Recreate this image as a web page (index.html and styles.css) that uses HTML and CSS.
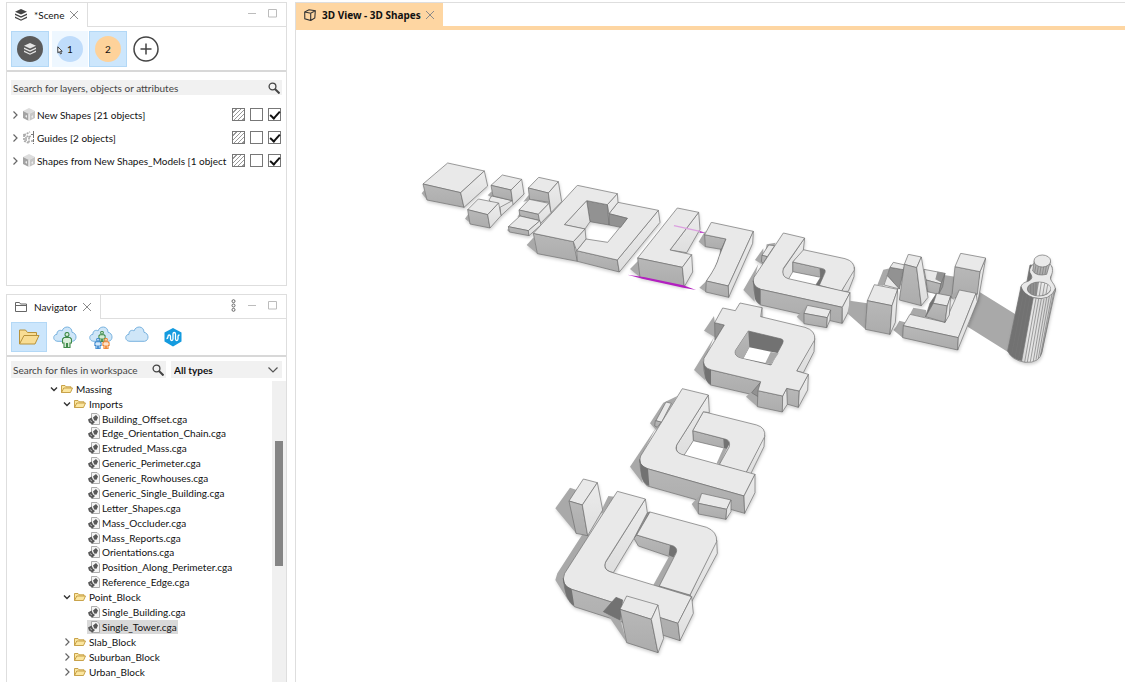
FILE: index.html
```html
<!DOCTYPE html>
<html lang="en">
<head>
<meta charset="utf-8">
<title>3D View - 3D Shapes</title>
<link rel="stylesheet" href="styles.css">
</head>
<body>
<svg class="defs" width="0" height="0" aria-hidden="true">
  <symbol id="close" viewBox="0 0 10 10"><path d="M1 1l8 8M9 1L1 9" fill="none" stroke="#8a8a8a"/></symbol>
  <symbol id="min" viewBox="0 0 10 10"><path d="M1 4.500h8" stroke="#bcbcbc" fill="none"/></symbol>
  <symbol id="max" viewBox="0 0 10 10"><path d="M.5.500h8v7.500h-8z" stroke="#bcbcbc" fill="none"/></symbol>
  <symbol id="right" viewBox="0 0 8 10"><path d="M2.500 1.500L6 5 2.500 8.500" stroke="#666" stroke-width="1.200" fill="none"/></symbol>
  <symbol id="down" viewBox="0 0 8 10"><path d="M1 3.500L4 6.500 7 3.500" stroke="#333" stroke-width="1.400" fill="none"/></symbol>
  <symbol id="search" viewBox="0 0 12 12"><circle cx="4.500" cy="4.500" r="3.400" fill="none" stroke="#444" stroke-width="1.300"/><path d="M7 7l4.500 4.500" stroke="#444" stroke-width="2"/></symbol>
  <symbol id="layers" viewBox="0 0 12 12"><path d="M6 0l6 2.800-6 2.800L0 2.800zM0 4.500l6 2.800 6-2.800v1.400L6 8.700 0 5.900zM0 7.600l6 2.800 6-2.800V9l-6 2.800L0 9z" fill="currentColor"/></symbol>
  <symbol id="folder" viewBox="0 0 12 10"><path d="M.5 8.500v-7h3.500l1 1.300h5V4M.5 8.500L2.800 4h8.700L9.500 8.500z" fill="#fbe6a0" stroke="#c39a3c" stroke-width=".9"/></symbol>
  <symbol id="rule" viewBox="0 0 12 12"><path d="M3.500.5H9L11.500 3v8.500h-8z" fill="#f4f4f4" stroke="#999" stroke-width=".8"/><path d="M5 4.500L8 2l2 2.500-1.500 3.200L6.200 7.500zM0 6.500L3.500 4.500 5 7.500 7 9 4.500 11.500 1 9.500z" fill="#585858"/><path d="M2 7.500l2 1.500" stroke="#ddd" stroke-width=".7"/></symbol>
  <symbol id="cube" viewBox="0 0 12 13"><path d="M6 0l6 3-6 3-6-3z" fill="#ddd"/><path d="M0 3l6 3v7l-6-3z" fill="#a3a3a3"/><path d="M12 3L6 6v7l6-3z" fill="#c6c6c6"/><path d="M6 6v7" stroke="#fff" stroke-width="1.200"/><path d="M2 8l2-1v3zM8 9l2-2v3z" fill="#eee"/></symbol>
  <symbol id="guide" viewBox="0 0 12 13"><path d="M1 4l6-3M1 4v6l5 2V6zM6 6l2-1" stroke="#aaa" stroke-width="1.700" stroke-dasharray="2 1" fill="none"/><path d="M3 6v4" stroke="#bbb" stroke-width="2"/><path d="M10.500 0v13M8 3.500h4M8 10h4" stroke="#777" stroke-dasharray="3 1" fill="none"/></symbol>
  <symbol id="cloud" viewBox="0 0 24 16"><path d="M5 15.300C-.5 15.300-.5 8.600 4 8.300 3.500 4.500 7.500 3.500 9 5 10.500-.5 19-.5 19 6.300c5 .7 5.500 8.300.5 9z" fill="#cfe6f8" stroke="#78b2df"/></symbol>
  <symbol id="person" viewBox="0 0 10 16"><circle cx="5" cy="2.500" r="2"/><path d="M2 5.500h6l1.500 1.500v4H8v4.500H5.500v-4h-1v4H2V11H.5V7z"/></symbol>
</svg>
<div class="app">
  <div class="side">
    <section class="panel scene">
      <header class="head">
        <div class="tab"><svg class="i12 ink"><use href="#layers"/></svg><h2>*Scene</h2><button class="ic" aria-label="Close Scene"><svg class="i10"><use href="#close"/></svg></button></div>
        <div class="win"><button class="ic" aria-label="Minimize"><svg class="i10"><use href="#min"/></svg></button><button class="ic" aria-label="Maximize"><svg class="i10"><use href="#max"/></svg></button></div>
      </header>
      <div class="tools">
        <button class="scenario on" aria-label="Default layers"><span class="disc dark"><svg class="i12"><use href="#layers"/></svg></span></button>
        <button class="scenario hover"><svg class="cursor" viewBox="0 0 6 9"><path d="M.8.8v6L2.300 5.600 3.500 8 4.500 7.500 3.500 5.300h1.700z" fill="#fff" stroke="#333" stroke-width=".9"/></svg><span class="disc blue">1</span></button>
        <button class="scenario on"><span class="disc orange">2</span></button>
        <button class="scenario plain" aria-label="Add scenario"><svg class="plus" viewBox="0 0 26 26"><circle cx="13" cy="13" r="12" fill="#fff" stroke="#444" stroke-width="1.500"/><path d="M13 7.500v11M7.500 13h11" stroke="#444" stroke-width="1.500"/></svg></button>
      </div>
      <div class="filters"><label class="field"><input type="search" placeholder="Search for layers, objects or attributes" aria-label="Search layers"><svg class="i12"><use href="#search"/></svg></label></div>
      <ul class="layers">
        <li><button class="ic" aria-label="Expand"><svg class="tw"><use href="#right"/></svg></button><svg class="i13"><use href="#cube"/></svg><span class="name">New Shapes [21 objects]</span><input class="hatch" type="checkbox" aria-label="Color New Shapes"><input type="checkbox" aria-label="Lock New Shapes"><input type="checkbox" checked aria-label="Show New Shapes"></li>
        <li><button class="ic" aria-label="Expand"><svg class="tw"><use href="#right"/></svg></button><svg class="i13"><use href="#guide"/></svg><span class="name">Guides [2 objects]</span><input class="hatch" type="checkbox" aria-label="Color Guides"><input type="checkbox" aria-label="Lock Guides"><input type="checkbox" checked aria-label="Show Guides"></li>
        <li><button class="ic" aria-label="Expand"><svg class="tw"><use href="#right"/></svg></button><svg class="i13"><use href="#cube"/></svg><span class="name">Shapes from New Shapes_Models [1 object</span><input class="hatch" type="checkbox" aria-label="Color models"><input type="checkbox" aria-label="Lock models"><input type="checkbox" checked aria-label="Show models"></li>
      </ul>
    </section>

    <section class="panel navigator">
      <header class="head">
        <div class="tab"><svg class="i12" viewBox="0 0 12 12"><path d="M.5 10.500v-9h4l1 1.500h6v7.500zM.5 4.500h11" fill="#fff" stroke="#666"/></svg><h2>Navigator</h2><button class="ic" aria-label="Close Navigator"><svg class="i10"><use href="#close"/></svg></button></div>
        <div class="win"><button class="ic" aria-label="View menu"><svg class="dots" viewBox="0 0 5 13"><g fill="#fff" stroke="#666"><circle cx="2.500" cy="2.200" r="1.500"/><circle cx="2.500" cy="6.500" r="1.500"/><circle cx="2.500" cy="10.800" r="1.500"/></g></svg></button><button class="ic" aria-label="Minimize"><svg class="i10"><use href="#min"/></svg></button><button class="ic" aria-label="Maximize"><svg class="i10"><use href="#max"/></svg></button></div>
      </header>
      <div class="tools places">
        <button class="place on" aria-label="Workspace"><svg viewBox="0 0 24 24"><path d="M2.500 19V5h6l2 2.500h9V11M2.500 19L7 10.500h15L18 19z" fill="#f8dd94" stroke="#b8923a"/></svg></button>
        <button class="place" aria-label="My content"><svg viewBox="0 0 24 24"><use href="#cloud" width="24" height="16" y="1"/><g fill="#dcefdc" stroke="#3f8a49" stroke-width="1.100"><use href="#person" x="9" y="7" width="10" height="16"/></g></svg></button>
        <button class="place" aria-label="My groups"><svg viewBox="0 0 24 24"><use href="#cloud" width="24" height="16" y="1"/><g fill="#d5ecd5" stroke="#3f8a49" stroke-width="1.500"><use href="#person" x="9" y="6" width="8" height="11"/></g><g fill="#d5e9fa" stroke="#3a86cc" stroke-width="1.500"><use href="#person" x="5" y="13" width="8" height="11"/></g><g fill="#fde3cc" stroke="#ee8330" stroke-width="1.500"><use href="#person" x="13" y="13" width="8" height="11"/></g></svg></button>
        <button class="place" aria-label="All portal content"><svg viewBox="0 0 24 24"><use href="#cloud" width="24" height="16" y="1"/></svg></button>
        <button class="place" aria-label="Urban"><svg viewBox="0 0 24 24"><path d="M12 3l8.500 4.500v9L12 21.500l-8.500-5v-9z" fill="#149bdf"/><path d="M5.500 13.500q1.500 0 1.500-2 0-1.500 1.200-1.500t1.300 1.500v2.500q0 1.500 1.200 1.500t1.300-1.500V9q0-1.500 1.200-1.500T14.500 9v5q0 1.500 1.200 1.500T17 14v-2.500q0-1.500 1.500-1.500" fill="none" stroke="#fff" stroke-width="1.300"/></svg></button>
      </div>
      <div class="filters split"><label class="field"><input type="search" placeholder="Search for files in workspace" aria-label="Search files"><svg class="i12"><use href="#search"/></svg></label>
        <div class="pick"><select aria-label="File types"><option>All types</option></select><svg class="caret" viewBox="0 0 10 8"><path d="M.5 1.500L5 6l4.500-4.500" fill="none" stroke="#555" stroke-width="1.200"/></svg></div></div>
      <div class="files">
        <ul class="tree">
          <li class="d0"><button class="ic" aria-label="Collapse"><svg class="tw"><use href="#down"/></svg></button><svg class="fo"><use href="#folder"/></svg><span>Massing</span></li>
          <li class="d1"><button class="ic" aria-label="Collapse"><svg class="tw"><use href="#down"/></svg></button><svg class="fo"><use href="#folder"/></svg><span>Imports</span></li>
          <li class="d2"><a href="#f"><svg class="i12"><use href="#rule"/></svg>Building_Offset.cga</a></li>
          <li class="d2"><a href="#f"><svg class="i12"><use href="#rule"/></svg>Edge_Orientation_Chain.cga</a></li>
          <li class="d2"><a href="#f"><svg class="i12"><use href="#rule"/></svg>Extruded_Mass.cga</a></li>
          <li class="d2"><a href="#f"><svg class="i12"><use href="#rule"/></svg>Generic_Perimeter.cga</a></li>
          <li class="d2"><a href="#f"><svg class="i12"><use href="#rule"/></svg>Generic_Rowhouses.cga</a></li>
          <li class="d2"><a href="#f"><svg class="i12"><use href="#rule"/></svg>Generic_Single_Building.cga</a></li>
          <li class="d2"><a href="#f"><svg class="i12"><use href="#rule"/></svg>Letter_Shapes.cga</a></li>
          <li class="d2"><a href="#f"><svg class="i12"><use href="#rule"/></svg>Mass_Occluder.cga</a></li>
          <li class="d2"><a href="#f"><svg class="i12"><use href="#rule"/></svg>Mass_Reports.cga</a></li>
          <li class="d2"><a href="#f"><svg class="i12"><use href="#rule"/></svg>Orientations.cga</a></li>
          <li class="d2"><a href="#f"><svg class="i12"><use href="#rule"/></svg>Position_Along_Perimeter.cga</a></li>
          <li class="d2"><a href="#f"><svg class="i12"><use href="#rule"/></svg>Reference_Edge.cga</a></li>
          <li class="d1"><button class="ic" aria-label="Collapse"><svg class="tw"><use href="#down"/></svg></button><svg class="fo"><use href="#folder"/></svg><span>Point_Block</span></li>
          <li class="d2"><a href="#f"><svg class="i12"><use href="#rule"/></svg>Single_Building.cga</a></li>
          <li class="d2"><a class="sel" href="#f"><svg class="i12"><use href="#rule"/></svg>Single_Tower.cga</a></li>
          <li class="d1"><button class="ic" aria-label="Expand"><svg class="tw"><use href="#right"/></svg></button><svg class="fo"><use href="#folder"/></svg><span>Slab_Block</span></li>
          <li class="d1"><button class="ic" aria-label="Expand"><svg class="tw"><use href="#right"/></svg></button><svg class="fo"><use href="#folder"/></svg><span>Suburban_Block</span></li>
          <li class="d1"><button class="ic" aria-label="Expand"><svg class="tw"><use href="#right"/></svg></button><svg class="fo"><use href="#folder"/></svg><span>Urban_Block</span></li>
        </ul>
        <div class="track"><div class="thumb"></div></div>
      </div>
    </section>
  </div>

  <main class="view">
    <header class="viewhead"><div class="viewtab"><svg class="i12" viewBox="0 0 12 12"><path d="M.7 3L5 .7l6.300 1L10.800 9l-4 2.500-6-1.700zM.7 3l6 1.200 4.600-2.500M6.700 4.200v7" fill="none" stroke="#333" stroke-width="1.100"/></svg><h1>3D View - 3D Shapes</h1><button class="ic" aria-label="Close 3D View"><svg class="i10"><use href="#close"/></svg></button></div></header>
    <svg class="canvas" viewBox="296 30 829 652" preserveAspectRatio="xMinYMin meet" role="img" aria-label="Massing models">
      <defs>
        <linearGradient id="gs" x1="0" y1="0" x2="0" y2="1"><stop offset="0" stop-color="#b8b8b8"/><stop offset="1" stop-color="#acacac"/></linearGradient>
        <linearGradient id="gr" x1="0" y1="0" x2="0" y2="1"><stop offset="0" stop-color="#ececec"/><stop offset="1" stop-color="#dedede"/></linearGradient>
        <linearGradient id="gc"><stop offset="0" stop-color="#b5b5b5"/><stop offset=".45" stop-color="#e6e6e6"/><stop offset="1" stop-color="#cfcfcf"/></linearGradient>
      </defs>
      <g transform="translate(415 150) scale(.33333)">
        <g class="solid">
          <path class="h" d="M20 130L28 120 36 150Z"/>
          <path class="t" d="M98 39L208 63 137 128 24 102Z"/><path class="s" d="M24 102L137 128 147 172 36 150Z"/><path class="r" d="M137 128L208 63 218 108 147 172Z"/>
        </g>
        <g class="solid">
          <path class="h" d="M218 136L230 124 236 145ZM150 206L160 192 165 218Z"/>
          <path class="t" d="M230 138L292 152 258 185 222 150Z"/><path class="r" d="M255 172L292 152 327 130 296 162 258 197Z"/>
          <path class="t" d="M262 75L320 88 288 120 228 106Z"/><path class="s" d="M228 106L288 120 292 152 234 138Z"/><path class="r" d="M288 120L320 88 327 132 294 164Z"/>
          <path class="t" d="M190 147L251 159 218 194 158 179Z"/><path class="s" d="M158 179L218 194 225 234 165 222Z"/><path class="r" d="M218 194L251 159 258 197 225 234Z"/>
        </g>
        <g class="solid">
          <path class="h" d="M325 155L341 135 346 150ZM307 202L314 190 318 198ZM276 240L281 236 283 246Z"/>
          <path class="t" d="M371 82L430 95 400 129 340 114Z"/><path class="s" d="M340 114L400 129 404 157 344 148Z"/><path class="r" d="M400 129L430 95 440 155 408 188Z"/>
          <path class="t" d="M343 148L402 160 370 193 312 180Z"/><path class="s" d="M312 180L370 193 375 212 315 198Z"/><path class="r" d="M370 193L402 160 408 188 375 222Z"/>
          <path class="t" d="M315 198L375 212 340 242 280 230Z"/><path class="s" d="M280 230L340 242 342 257 283 246Z"/><path class="r" d="M340 242L375 212 378 225 342 257Z"/>
        </g>
        <g class="solid">
          <path class="h" d="M335 285L356 262 367 311Z"/>
          <path class="s" d="M355 250L475 275 487 334 367 311Z"/><path class="s" d="M485 302L607 330 613 366 487 334Z"/><path class="r" d="M607 330L730 181 735 217 613 366Z"/>
          <path class="t" d="M609 157L730 181 607 330 485 302 513 267 578 277 637 205 582 191Z"/>
          <path class="r" d="M475 275L510 237 513 267 485 302ZM577 164L607 131 609 157 582 191Z"/>
          <path class="m" d="M515 152L577 164 582 225 525 215ZM582 191L637 205 617 232 582 225Z"/><path class="r" d="M515 152L525 215 510 237 448 224Z"/>
          <path class="t" d="M487 106L607 131 577 164 515 152 448 224 510 237 475 275 355 250Z"/>
        </g>
      </g>
      <g transform="translate(620 190) scale(.33333)">
        <g class="solid">
          <path class="h" d="M30 237L54 213 60 262Z"/>
          <path class="r" d="M236 67L240 118 200 188 150 180Z"/><path class="t" d="M172 54L236 67 150 180 215 194 187 232 53 204Z"/><path class="s" d="M53 204L187 232 193 290 60 262Z"/><path class="r" d="M187 232L215 194 218 246 193 290Z"/>
        </g>
        <path class="mag" d="M22 254L75 262 190 286 228 300 190 293 70 267Z"/><path class="mag" d="M235 122L258 128 240 128Z"/><path d="M162 107L240 124" stroke="#dca0e0" stroke-width="4"/>
        <g class="solid">
          <path class="h" d="M236 155L256 122 256 172ZM238 293L259 273 258 306Z"/><path class="m" d="M318 147L302 175Q304 215 262 270L280 250Z"/>
          <path class="s" d="M254 134L318 147 304 178 256 170Z"/><path class="t" d="M274 97L400 124 325 288 259 273Q290 230 297 200L318 147 254 134Z"/><path class="s" d="M259 273L325 288 326 322 257 306Z"/><path class="r" d="M325 288L400 124 398 160 326 322Z"/>
        </g>
        <g class="solid">
          <path class="h" d="M370 300L415 222 402 270 404 335ZM405 210L430 175 430 225Z"/><path class="h" d="M440 163L467 158 455 185 430 218Z"/><path class="t" d="M446 165L464 167 442 200 426 196Z"/><path class="s" d="M426 196L442 200 430 220 424 215Z"/>
          <path class="r" d="M703 232L702 260 685 304 664 304Z"/><path class="w" d="M518 243L602 260 590 285 505 267Z"/><path class="s" d="M518 216L608 236 602 262 518 245Z"/><path class="d" d="M600 236L616 240 600 287 588 284 602 262Z"/>
          <path class="t" d="M545 178L675 206Q705 214 703 240L664 304 598 286 615 248Q618 238 608 236L518 216Z"/>
          <path class="r" d="M554 144L550 180 518 216V246L505 268Q485 262 488 240Z"/>
          <path class="t" d="M490 129L554 144 490 235Q483 260 505 266L690 308 667 352 422 298Q392 288 402 262Z"/>
          <path class="s" d="M400 272Q400 291 422 298L667 352 666 400 422 345Q402 335 400 272Z"/><path class="d n" d="M401 278Q405 292 422 298V345Q404 335 404 320Z"/><path class="r" d="M667 352L690 308 689 358 667 400Z"/>
          <path class="h" d="M530 380L560 347 552 401Z"/><path class="t" d="M562 346L632 360 622 383 552 370Z"/><path class="s" d="M552 370L622 383 620 413 552 401Z"/><path class="r" d="M622 383L632 360 630 390 620 413Z"/>
        </g>
      </g>
      <g transform="translate(840 235) scale(.33333)">
        <path class="h" d="M30 197L82 205 76 283 22 235ZM420 172L530 240 505 352 383 275ZM168 275L178 257 195 262 188 308 160 285Z"/>
        <g class="solid"><path class="t" d="M103 149L173 163 156 212 82 197Z"/><path class="s" d="M82 197L156 212 150 298 76 283Z"/><path class="r" d="M156 212L173 163 166 262 150 298Z"/></g>
        <path class="h" d="M112 150L130 104 150 100 130 153Z"/><path class="m" d="M150 97L192 104 178 162 142 122Z"/><path class="t" d="M160 82L195 90 190 104 150 97ZM142 122L178 162 132 150Z"/>
        <path class="h" d="M312 120L345 125 338 190 296 178Z"/><path class="t" d="M252 103L315 115 303 147 258 135Z"/><path class="m n" d="M292 110L315 115 305 143 286 133Z"/><path class="s" d="M258 135L303 147 296 178 262 170Z"/><path class="m" d="M303 147L315 115 308 155 296 178Z"/>
        <g class="solid"><path class="t" d="M205 58L244 66 230 98 193 88Z"/><path class="s" d="M193 88L230 98 244 212 178 195Z"/><path class="r" d="M230 98L244 66 264 187 244 212Z"/></g>
        <g class="solid">
          <path class="r" d="M420 110L437 69 414 200 405 195Z"/><path class="s" d="M345 95L420 110 412 178 335 190Z"/><path class="t" d="M362 55L437 69 420 110 345 95Z"/>
          <path class="h" d="M210 238L220 218 258 225 260 248ZM335 180L358 165 340 195Z"/>
          <path class="t" d="M358 165L408 175 355 308 190 272 210 238 315 262Z"/><path class="s" d="M190 272L355 308 353 345 188 308Z"/><path class="r" d="M355 308L408 175 412 200 353 345Z"/>
          <path class="d" d="M290 175L280 205 257 245 270 205Z"/><path class="t" d="M290 175L332 183 322 213 280 205Z"/><path class="s" d="M280 205L322 213 315 262 257 245Z"/><path class="r" d="M322 213L332 183 328 240 315 262Z"/>
        </g>
        <g class="solid">
          <path class="d" d="M570 90L558 155 630 150 636 95Z"/>
          <path class="t" d="M582 85Q560 105 574 120 582 135 555 142C530 155 548 175 570 185 600 197 640 192 646 168 648 145 628 140 632 125 642 108 637 92 628 85Z"/>
          <path class="c" d="M543 155Q550 178 580 188 630 200 647 160L606 350Q600 385 555 382 515 375 503 348Z"/>
          <path class="d n" d="M543 155Q552 178 580 188L545 378Q512 370 503 348Z"/>
          <path class="ln" d="M551 172L515 358M560 180L525 368M570 185L535 374M580 188L545 378M588 190L554 381M596 192L562 381M604 192L571 380M612 192L580 378M620 189L588 374M628 184L595 370M636 177L601 363M642 170L604 358"/>
          <ellipse class="m" cx="597" cy="162" rx="35" ry="21"/><path class="r n" d="M590 182L597 142Q630 145 632 162 625 182 590 182Z"/><path class="ln" d="M572 150V174M580 146V178M588 142V181M604 142L598 182M614 145L608 181M623 149L618 177"/>
          <path class="s" d="M583 78L578 108Q590 125 620 118L631 80Z"/><path class="ln" d="M588 90L584 113M595 94L591 117M603 96L599 119M611 96L607 119M619 93L615 117"/><ellipse class="t" cx="607" cy="78" rx="25" ry="18"/>
        </g>
      </g>
      <g transform="translate(690 290) scale(.33333)">
        <g class="solid">
          <path class="h" d="M42 122L72 78 80 145ZM12 240L72 142 42 215 47 272Z"/><path class="m" d="M74 98L103 105 75 150Z"/>
          <path class="r" d="M374 145L372 185 340 248 320 243ZM216 53L216 82 208 78Z"/><path class="s" d="M40 215Q42 235 65 240L212 275 205 318 62 285Q42 275 40 215Z"/><path class="d n" d="M40 218Q44 234 63 240V285Q44 272 45 255Z"/>
          <path class="h" d="M168 320L212 278 202 350Z"/><path class="m" d="M185 308L212 276 204 320Z"/>
          <path class="s" d="M204 302L278 318 277 366 202 350ZM290 295L328 303 325 352 290 342Z"/><path class="r" d="M278 318L290 295 292 343 277 366ZM328 303L355 253 353 300 325 352Z"/>
          <path class="t" d="M150 39L216 53 212 80 345 112Q378 122 374 150L320 243 355 253 328 303 290 295 278 318 204 302 212 275 65 240Q35 232 42 205L103 105 74 98 98 54 136 62Z"/>
          <path class="d" d="M175 123L275 147Q282 150 278 160L243 225 150 203Q132 197 136 182Z"/><path class="w n" d="M178 172L265 190 243 223 160 205Z"/><path class="s n" d="M175 123L178 172 160 206Q132 200 136 182Z"/><path class="h" d="M242 186L266 190 243 223 226 219Z"/>
        </g>
      </g>
      <g transform="translate(620 380) scale(.33333)">
        <g class="solid">
          <path class="h" d="M30 260L110 140 62 230 68 310ZM90 130L130 68 172 48 108 150Z"/><path class="t" d="M138 66L154 70 124 128 108 122Z"/><path class="s" d="M106 122L124 126 112 142 104 138Z"/>
          <path class="r" d="M434 165L432 200 392 282 378 278Z"/><path class="w" d="M222 180L316 203 290 252 190 225Z"/><path class="s" d="M218 152L318 178 316 205 220 182Z"/><path class="h" d="M312 200L328 190 300 252 290 250Z"/><path class="d n" d="M310 176Q328 178 328 192L320 206 312 204Z"/>
          <path class="t" d="M250 95L410 135Q438 143 434 170L378 278 298 254 328 200Q332 182 318 178L218 152Z"/>
          <path class="r" d="M265 45L268 98 250 95 218 152 220 182 192 226Q164 222 170 195Z"/>
          <path class="t" d="M187 26L265 45 170 195Q162 215 185 223L405 283 372 348 82 266Q52 255 62 228Z"/>
          <path class="s" d="M59 238Q58 258 82 266L372 348 374 400 82 318Q62 305 59 238Z"/><path class="d n" d="M59 240Q60 256 84 266L88 318Q68 312 64 285Z"/><path class="r" d="M372 348L405 283 405 338 374 400Z"/>
          <path class="h" d="M215 372L245 340 235 402Z"/><path class="t" d="M245 340L333 360 320 388 235 370Z"/><path class="s" d="M235 370L320 388 318 418 235 402Z"/><path class="r" d="M320 388L333 360 333 395 318 418Z"/>
        </g>
      </g>
      <g transform="translate(540 470) scale(.33333)">
        <g class="solid">
          <path class="h" d="M46 115L90 53 110 60 110 192ZM180 130L205 78 222 80 188 130ZM128 192L148 195 72 320 85 392 46 330 52 310Z"/>
          <path class="t" d="M130 27L172 38 127 105 87 93Z"/><path class="s" d="M87 93L127 105 143 197 108 190Z"/><path class="r" d="M127 105L172 38 188 120 143 197Z"/>
          <path class="r" d="M530 210L532 250 455 395 450 375Z"/><path class="m" d="M322 128L330 126 290 205 280 200Z"/><path class="s" d="M290 195L400 228 410 245 395 262 295 228 282 205Z"/><path class="h" d="M388 258L408 250 358 350 340 345Z"/><path class="d n" d="M390 225Q412 230 410 245L400 262 386 256Z"/>
          <path class="s" d="M358 348L450 375 455 386 355 354Z"/><path class="t" d="M330 126L500 172Q532 185 530 215L450 375 358 348 408 250Q415 235 400 228L290 195Z"/>
          <path class="r" d="M316 87L322 128 282 205 220 308Q190 302 195 280Z"/>
          <path class="t" d="M232 64L316 87 197 275Q187 298 212 306L455 380 414 460 95 358Q60 345 74 310Z"/>
          <path class="s" d="M70 325Q69 350 95 358L414 460 420 512 103 410Q75 390 70 325Z"/><path class="d n" d="M70 328Q72 348 95 358L103 408Q82 395 76 365Z"/><path class="r" d="M414 460L455 380 460 430 420 512Z"/>
          <path class="h" d="M200 430L240 445 260 518Z"/><path class="d" d="M190 425L228 382 248 390 240 450Z"/>
          <path class="t" d="M260 378L354 405 334 448 240 418Z"/><path class="s" d="M240 418L334 448 354 548 260 518Z"/><path class="r" d="M334 448L354 405 371 505 354 548Z"/>
        </g>
      </g>
    </svg>
  </main>
</div>
</body>
</html>
```
FILE: styles.css
```css
* { box-sizing: border-box; }
body { margin: 0; background: #fff; color: #111; font: 10px/14px Lato, "Noto Sans", sans-serif; }
h1, h2 { margin: 0; font: inherit; }
h1 { font-family: "Noto Sans", sans-serif; font-weight: 700; color: #111; }
ul { margin: 0; padding: 0; list-style: none; }
button, input, select { font: inherit; color: inherit; }
svg { display: block; flex: none; }
.defs { position: absolute; }
.app { display: flex; gap: 8px; height: 100vh; padding: 2px 0 0 6px; overflow: hidden; }
.side { display: flex; flex-direction: column; gap: 8px; flex: 0 0 281px; min-width: 0; min-height: 0; }
.panel { display: flex; flex-direction: column; min-height: 0; border: 1px solid #dedede; }
.scene { flex: 284 1 0; }
.navigator { flex: 389 1 0; border-bottom: 0; }
.head { display: flex; justify-content: space-between; height: 24px; }
.tab { display: flex; align-items: center; gap: 7px; padding: 0 8px; border-right: 1px solid #dedede; }
.tab .ic { margin-left: -2px; }
.win { display: flex; flex: 1; justify-content: flex-end; align-items: center; gap: 11px; padding: 0 8px 2px 0; border-bottom: 1px solid #dedede; }
.ic { display: flex; padding: 0; border: 0; background: none; }
.i10 { width: 10px; height: 10px; }
.i12 { width: 12px; height: 12px; }
.i13 { width: 12px; height: 13px; }
.ink { color: #444; }
.dots { width: 5px; height: 13px; }
.tools { display: flex; gap: 1px; padding: 4px; border-bottom: 2px solid #d8d8d8; height: 45px; }
.scenario { display: flex; align-items: center; justify-content: center; width: 38px; height: 36px; padding: 0; border: 1px solid transparent; background: none; }
.scenario.on, .place.on { background: #cce6fc; border: 1px solid #b3d8f6; }
.scenario.hover { position: relative; width: 36px; margin-left: 2px; background: #eef7ff; }
.scenario.plain { width: 36px; }
.disc { display: flex; align-items: center; justify-content: center; width: 26px; height: 26px; border-radius: 50%; }
.dark { background: #5a5a5a; color: #e5e5e5; }
.blue { background: #bfdcfb; }
.orange { background: #fed29a; }
.cursor { position: absolute; left: 4px; top: 14px; width: 6px; height: 9px; }
.plus { width: 26px; height: 26px; }
.filters { display: flex; gap: 5px; padding: 8px 4px 0; }
.field { display: flex; align-items: center; flex: 1; min-width: 0; height: 15px; padding-right: 2px; background: #f1f1f1; }
.field input { flex: 1; min-width: 0; padding: 0 0 0 2px; border: 0; background: none; outline: 0; height: 15px; }
.field input::placeholder { color: #444; opacity: 1; }
.layers { padding-top: 8px; }
.layers li { display: flex; align-items: center; height: 23px; padding: 0 5px 0 4px; gap: 5px; }
.layers .i13 { margin-left: -1px; }
.layers .name { flex: 1; min-width: 0; margin: 0 -1px 0 -3px; overflow: hidden; white-space: nowrap; }
.tw { width: 8px; height: 10px; }
.layers input { display: grid; place-items: center; appearance: none; flex: none; width: 13px; height: 13px; margin: 0; border: 1px solid #777; background: #fff; }
.layers .hatch { background: repeating-linear-gradient(135deg, #fff 0 2px, #999 2px 3px); }
.layers input:checked::after { content: ""; width: 4px; height: 8px; margin-bottom: 2px; border: solid #111; border-width: 0 2px 2px 0; transform: rotate(42deg); }
.places { height: 38px; gap: 0; padding: 3px 4px; }
.place { display: flex; align-items: center; justify-content: center; width: 36px; height: 30px; padding: 0; border: 1px solid transparent; background: none; }
.place svg { width: 24px; height: 24px; }
.split { padding-top: 4px; }
.pick { position: relative; flex: 0 0 111px; background: #f1f1f1; }
.pick select { appearance: none; width: 100%; height: 17px; padding: 0 3px; border: 0; background: none; color: #111; font-weight: 700; }
.caret { position: absolute; right: 4px; top: 5px; width: 10px; height: 8px; pointer-events: none; }
.split .field { height: 17px; }
.files { display: flex; flex: 1; min-height: 0; margin-top: 3px; }
.tree { display: grid; grid-auto-rows: 1fr; flex: 1; min-width: 0; padding-bottom: 3px; }
.tree li { display: flex; align-items: center; gap: 3px; min-height: 0; }
.d0 { padding-left: 43px; }
.d1 { padding-left: 56px; }
.d2 { padding-left: 80px; }
.fo { width: 12px; height: 10px; }
.tree a { display: flex; align-items: center; gap: 2px; padding: 0 1px; color: inherit; text-decoration: none; }
.tree .sel { background: #d9d9d9; }
.track { flex: 0 0 14px; padding: 60px 3px 0; background: #f0f0f0; }
.thumb { height: 52%; max-height: 125px; background: #858585; }
.view { display: flex; flex-direction: column; flex: 1; min-width: 0; border-left: 1px solid #dedede; border-top: 1px solid #dedede; }
.viewhead { display: flex; border-bottom: 4px solid #fed6a2; }
.viewtab { display: flex; align-items: center; gap: 6px; height: 23px; padding: 0 8px; background: #fed6a2; }
.viewtab .ic { margin-left: -2px; }
.canvas { width: 100%; flex: 1; min-height: 0; }
.canvas path, .canvas ellipse { stroke-linejoin: round; }
.solid { filter: drop-shadow(2px 6px 5px rgba(0, 0, 0, .18)); }
.t, .s, .r, .d, .m, .c { stroke: #6c6c6c; stroke-width: 2; }
.t { fill: #e9e9e9; }
.s { fill: url(#gs); }
.r { fill: url(#gr); }
.c { fill: url(#gc); }
.m { fill: #929292; }
.d { fill: #727272; }
.h { fill: #a9a9a9; }
.w { fill: #fff; }
.n { stroke: none; }
.ln { stroke: #777; stroke-width: 2; fill: none; }
.mag { fill: #b31fc0; }
```
